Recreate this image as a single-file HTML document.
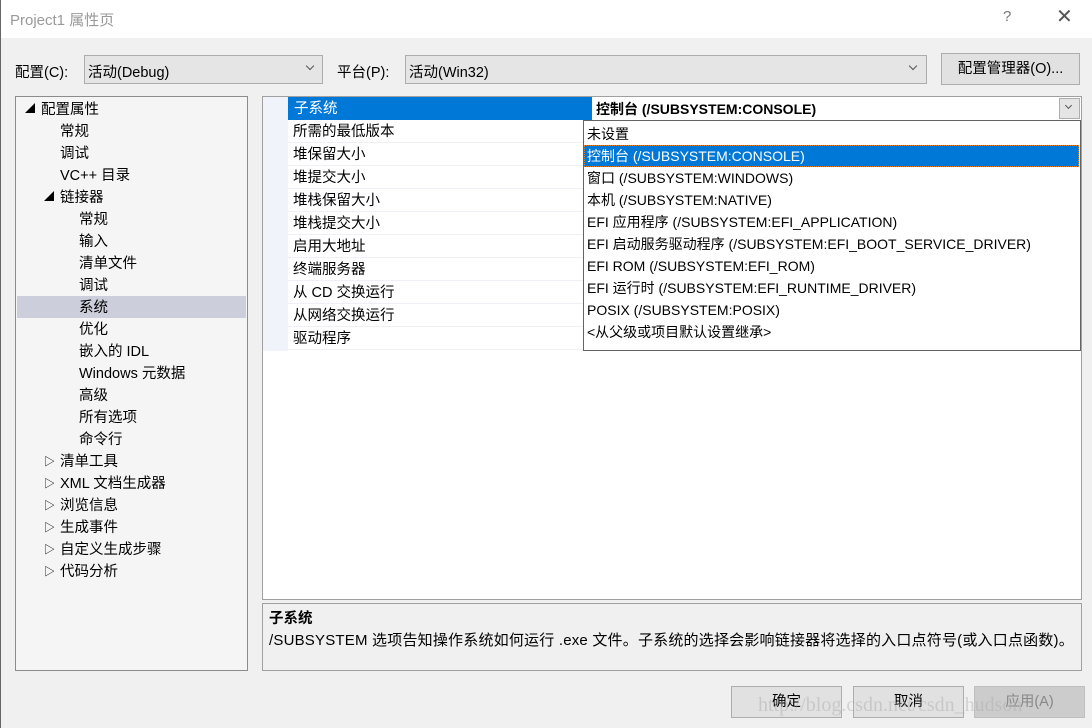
<!DOCTYPE html><html><head><meta charset="utf-8"><style>
*{margin:0;padding:0;box-sizing:border-box}
body{width:1092px;height:728px;background:#f0f0f0;font-family:"Liberation Sans","Noto Sans CJK SC",sans-serif;font-size:14px;color:#000;position:relative;overflow:hidden}
.a{position:absolute;white-space:nowrap}
.row{position:absolute;height:22px;line-height:22px;white-space:nowrap}
.chev{position:absolute;width:7px;height:7px;border-right:1px solid #555;border-bottom:1px solid #555;transform:rotate(45deg)}
.btn{position:absolute;height:32px;background:#e1e1e1;border:1px solid #adadad;text-align:center;line-height:30px}
</style></head><body>
<div class="a" style="left:0;top:0;width:1092px;height:38px;background:#fff;border-left:1px solid #666"></div>
<div class="a" style="left:10px;top:9px;font-size:15px;color:#999">Project1 属性页</div>
<div class="a" style="left:1003px;top:8px;font-size:15px;color:#777">?</div>
<div class="a" style="left:1056px;top:4px;font-size:20px;color:#555;font-weight:300">✕</div>
<div class="a" style="left:0;top:38px;width:1px;height:690px;background:#666"></div>

<div class="a" style="left:15px;top:61px;font-size:14.5px">配置(C):</div>
<div class="a" style="left:84px;top:55px;width:239px;height:29px;background:#e5e5e5;border:1px solid #adadad"></div>
<div class="a" style="left:88px;top:61px;font-size:14.5px">活动(Debug)</div>
<div class="chev" style="left:307px;top:63px;width:6px;height:6px"></div>
<div class="a" style="left:337px;top:61px;font-size:14.5px">平台(P):</div>
<div class="a" style="left:405px;top:55px;width:522px;height:29px;background:#e5e5e5;border:1px solid #adadad"></div>
<div class="a" style="left:409px;top:61px;font-size:14.5px">活动(Win32)</div>
<div class="chev" style="left:910px;top:63px;width:6px;height:6px"></div>
<div class="btn" style="left:941px;top:53px;width:139px;line-height:31px;font-size:14.5px">配置管理器(O)...</div>

<!-- tree -->
<div class="a" style="left:15px;top:96px;width:233px;height:575px;background:#f5f5f5;border:1px solid #8c8c8c"></div>
<div class="a" style="left:17px;top:296px;width:229px;height:22px;background:#cccedb"></div>
<div style="position:absolute;left:0;top:99px;font-size:14.5px">
<div class="row" style="left:25px;top:0;font-size:10px">◢</div><div class="row" style="left:41px;top:0">配置属性</div>
<div class="row" style="left:60px;top:22px">常规</div>
<div class="row" style="left:60px;top:44px">调试</div>
<div class="row" style="left:60px;top:66px">VC++ 目录</div>
<div class="row" style="left:44px;top:88px;font-size:10px">◢</div><div class="row" style="left:60px;top:88px">链接器</div>
<div class="row" style="left:79px;top:110px">常规</div>
<div class="row" style="left:79px;top:132px">输入</div>
<div class="row" style="left:79px;top:154px">清单文件</div>
<div class="row" style="left:79px;top:176px">调试</div>
<div class="row" style="left:79px;top:198px">系统</div>
<div class="row" style="left:79px;top:220px">优化</div>
<div class="row" style="left:79px;top:242px">嵌入的 IDL</div>
<div class="row" style="left:79px;top:264px">Windows 元数据</div>
<div class="row" style="left:79px;top:286px">高级</div>
<div class="row" style="left:79px;top:308px">所有选项</div>
<div class="row" style="left:79px;top:330px">命令行</div>
<div class="row" style="left:44px;top:352px;font-size:11px">▷</div><div class="row" style="left:60px;top:352px">清单工具</div>
<div class="row" style="left:44px;top:374px;font-size:11px">▷</div><div class="row" style="left:60px;top:374px">XML 文档生成器</div>
<div class="row" style="left:44px;top:396px;font-size:11px">▷</div><div class="row" style="left:60px;top:396px">浏览信息</div>
<div class="row" style="left:44px;top:418px;font-size:11px">▷</div><div class="row" style="left:60px;top:418px">生成事件</div>
<div class="row" style="left:44px;top:440px;font-size:11px">▷</div><div class="row" style="left:60px;top:440px">自定义生成步骤</div>
<div class="row" style="left:44px;top:462px;font-size:11px">▷</div><div class="row" style="left:60px;top:462px">代码分析</div>
</div>

<!-- grid -->
<div class="a" style="left:262px;top:96px;width:820px;height:504px;background:#fff;border:1px solid #a0a0a0"></div>
<div class="a" style="left:263px;top:97px;width:25px;height:254px;background:#f0f4fa"></div>
<div class="a" style="left:288px;top:97px;width:304px;height:23px;background:#0078d7"></div>
<div class="row" style="left:294px;top:98px;color:#fff;font-size:14.5px">子系统</div>
<div class="row" style="left:596px;top:98px;font-weight:bold">控制台 (/SUBSYSTEM:CONSOLE)</div>
<div class="a" style="left:1059px;top:98px;width:21px;height:21px;background:#e5e5e5;border:1px solid #adadad"></div>
<div class="chev" style="left:1066px;top:103px;width:5px;height:5px"></div>
<div style="position:absolute;left:288px;top:121px;width:794px;font-size:14.5px">
<div class="row" style="left:0;top:0;width:792px;border-bottom:1px solid #eef0f5;padding-left:5px">所需的最低版本</div>
<div class="row" style="left:0;top:23px;width:792px;border-bottom:1px solid #eef0f5;padding-left:5px">堆保留大小</div>
<div class="row" style="left:0;top:46px;width:792px;border-bottom:1px solid #eef0f5;padding-left:5px">堆提交大小</div>
<div class="row" style="left:0;top:69px;width:792px;border-bottom:1px solid #eef0f5;padding-left:5px">堆栈保留大小</div>
<div class="row" style="left:0;top:92px;width:792px;border-bottom:1px solid #eef0f5;padding-left:5px">堆栈提交大小</div>
<div class="row" style="left:0;top:115px;width:792px;border-bottom:1px solid #eef0f5;padding-left:5px">启用大地址</div>
<div class="row" style="left:0;top:138px;width:792px;border-bottom:1px solid #eef0f5;padding-left:5px">终端服务器</div>
<div class="row" style="left:0;top:161px;width:792px;border-bottom:1px solid #eef0f5;padding-left:5px">从 CD 交换运行</div>
<div class="row" style="left:0;top:184px;width:792px;border-bottom:1px solid #eef0f5;padding-left:5px">从网络交换运行</div>
<div class="row" style="left:0;top:207px;width:792px;border-bottom:1px solid #eef0f5;padding-left:5px">驱动程序</div>
</div>

<!-- dropdown -->
<div class="a" style="left:583px;top:120px;width:498px;height:231px;background:#fff;border:1px solid #646464"></div>
<div class="a" style="left:584px;top:145px;width:495px;height:22px;background:#0078d7;border:1px dotted #e08020"></div>
<div style="position:absolute;left:587px;top:123px">
<div class="row" style="top:0">未设置</div>
<div class="row" style="top:22px;color:#fff">控制台 (/SUBSYSTEM:CONSOLE)</div>
<div class="row" style="top:44px">窗口 (/SUBSYSTEM:WINDOWS)</div>
<div class="row" style="top:66px">本机 (/SUBSYSTEM:NATIVE)</div>
<div class="row" style="top:88px">EFI 应用程序 (/SUBSYSTEM:EFI_APPLICATION)</div>
<div class="row" style="top:110px">EFI 启动服务驱动程序 (/SUBSYSTEM:EFI_BOOT_SERVICE_DRIVER)</div>
<div class="row" style="top:132px">EFI ROM (/SUBSYSTEM:EFI_ROM)</div>
<div class="row" style="top:154px">EFI 运行时 (/SUBSYSTEM:EFI_RUNTIME_DRIVER)</div>
<div class="row" style="top:176px">POSIX (/SUBSYSTEM:POSIX)</div>
<div class="row" style="top:198px">&lt;从父级或项目默认设置继承&gt;</div>
</div>

<!-- description -->
<div class="a" style="left:262px;top:603px;width:820px;height:68px;background:#f0f0f0;border:1px solid #a0a0a0"></div>
<div class="a" style="left:269px;top:607px;font-weight:bold;font-size:14.5px">子系统</div>
<div class="a" style="left:269px;top:629px;font-size:15px;letter-spacing:0.2px">/SUBSYSTEM 选项告知操作系统如何运行 .exe 文件。子系统的选择会影响链接器将选择的入口点符号(或入口点函数)。</div>

<div class="btn" style="left:731px;top:686px;width:111px;font-size:14.5px">确定</div>
<div class="btn" style="left:853px;top:686px;width:111px;font-size:14.5px">取消</div>
<div class="btn" style="left:974px;top:686px;width:111px;background:#ccc;border-color:#bfbfbf;color:#888;font-size:14.5px">应用(A)</div>
<div class="a" style="left:758px;top:694px;font-family:'Liberation Serif',serif;font-size:20px;color:rgba(170,170,170,0.45)">http://blog.csdn.net/csdn_hudson</div>
</body></html>
